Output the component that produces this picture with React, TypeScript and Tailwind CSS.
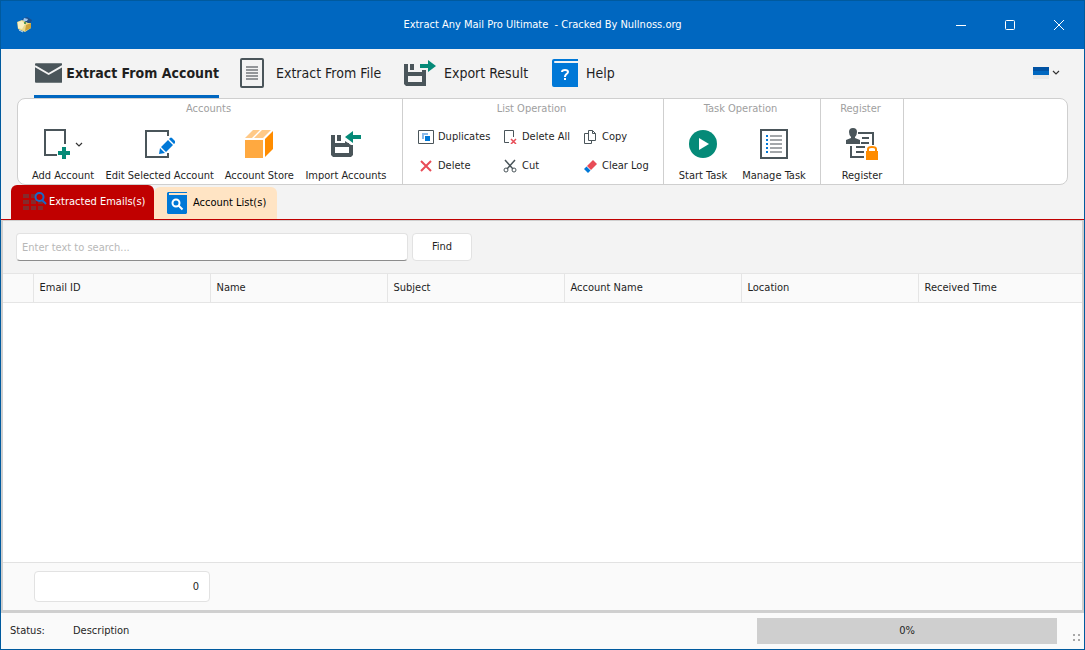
import type { ReactNode } from 'react';

const AppLogo = () => (
  <svg width="16" height="16" viewBox="0 0 16 16">
    <path d="M5 2l5-2 5 3-2 4-5 1z" fill="#1c4e8c" />
    <path d="M7 1l4 1-1 2-4 0z" fill="#9cc7ee" />
    <path d="M0 5l5-2 6 3 3 0 0 5-6 4-7-3z" fill="#e9d98c" />
    <path d="M1 5l4-1 3 3-3 5-4-1z" fill="#f7f0c4" />
    <path d="M9 8l5-2v5l-6 3z" fill="#cda33a" />
    <path d="M2 13l4 2" stroke="#cfe3f5" />
    <circle cx="8" cy="6" r="1" fill="#26803d" />
  </svg>
);

const MailIcon = () => (
  <svg width="28" height="20" viewBox="0 0 28 20">
    <rect width="28" height="20" rx="1" fill="#4a555a" />
    <path d="M0 3l14 8 14-8" fill="none" stroke="#f3f3f3" strokeWidth="2" />
  </svg>
);

const DocumentIcon = () => (
  <svg width="24" height="30" viewBox="0 0 24 30">
    <rect x="1" y="1" width="22" height="28" rx="1" fill="none" stroke="#4a555a" strokeWidth="2" />
    <path d="M6 9h12M6 12h12M6 15h12M6 18h12M6 21h12" stroke="#74787c" strokeWidth="1.500" />
  </svg>
);

const ExportIcon = () => (
  <svg width="32" height="26" viewBox="0 0 32 26">
    <path d="M0 4h4v8h14v-2h4v16H2l-2-2zM4 16v6h14v-6z" fill="#4a555a" fillRule="evenodd" />
    <path d="M6 4h4v6H6z" fill="#4a555a" />
    <path d="M16 4h8V0l8 6-8 6V8h-8z" fill="#058a78" />
  </svg>
);

const HelpIcon = () => (
  <svg width="26" height="28" viewBox="0 0 26 28">
    <path d="M2 0h24v2H3q-1 0-1 1t1 1h23v24H2q-2 0-2-2V2q0-2 2-2z" fill="#0078d7" />
    <path d="M10 13q0-2 3-2t3 2q0 1-2 2.500-1 1-1 2.500" fill="none" stroke="#fff" strokeWidth="2" />
    <path d="M12 19h2v2h-2z" fill="#fff" />
  </svg>
);

const Chevron = () => (
  <svg width="8" height="5" viewBox="0 0 8 5">
    <path d="M1 1l3 3 3-3" fill="none" stroke="#333" strokeWidth="1.200" />
  </svg>
);

const AddIcon = () => (
  <svg width="28" height="30" viewBox="0 0 28 30">
    <path d="M14 26H2V1h20v14" fill="none" stroke="#4a555a" strokeWidth="2" />
    <path d="M19 18h4v4h4v4h-4v4h-4v-4h-4v-4h4z" fill="#058a78" />
  </svg>
);

const EditIcon = () => (
  <svg width="30" height="28" viewBox="0 0 30 28">
    <path d="M23 6V1H1v26h22v-4" fill="none" stroke="#4a555a" strokeWidth="2" />
    <path d="M14 24l1-6 5 5zM16 17l7-7 5 5-7 7zM24 9l1-1q1-1 2 0l3 3q1 1 0 2l-1 1z" fill="#0078d7" />
  </svg>
);

const BoxIcon = () => (
  <svg width="28" height="28" viewBox="0 0 28 28">
    <path d="M0 10h18v18H0z" fill="#ffa940" />
    <path d="M20 9l8-8v18l-8 8z" fill="#ff8c00" />
    <path d="M0 8l8-8h7L7 8zM9 8l8-8h9l-8 8z" fill="#ffc987" />
  </svg>
);

const ImportIcon = () => (
  <svg width="30" height="26" viewBox="0 0 30 26">
    <path d="M0 4h4v8h14v2h4v10l-2 2H2l-2-2zM4 16v6h14v-6z" fill="#4a555a" fillRule="evenodd" />
    <path d="M6 4h4v6H6zM14 10l6 4h-6z" fill="#4a555a" />
    <path d="M30 4h-8V0l-8 6 8 6V8h8z" fill="#058a78" />
  </svg>
);

const DuplicatesIcon = () => (
  <svg width="16" height="14" viewBox="0 0 16 14">
    <path d="M.5.5h15v13H.5z" fill="none" stroke="#4a555a" />
    <path d="M4 3h6v2H6v4H4z" fill="#8ab9e8" />
    <path d="M7 6h5v5H7z" fill="#0078d7" />
  </svg>
);

const DeleteAllIcon = () => (
  <svg width="14" height="14" viewBox="0 0 14 14">
    <path d="M6 12.500H1.500V.5h9V7" fill="none" stroke="#4a555a" />
    <path d="M8 9l5 5M13 9l-5 5" stroke="#e84c57" strokeWidth="1.500" />
  </svg>
);

const CopyIcon = () => (
  <svg width="12" height="14" viewBox="0 0 12 14">
    <path d="M4 3.500H.5v10h7V11" fill="none" stroke="#4a555a" />
    <path d="M4.500.5h4l3 3v7h-7zM8.500.5v3h3" fill="none" stroke="#4a555a" />
  </svg>
);

const DeleteIcon = () => (
  <svg width="12" height="12" viewBox="0 0 12 12">
    <path d="M1 1l10 10M11 1L1 11" stroke="#e84c57" strokeWidth="2" />
  </svg>
);

const CutIcon = () => (
  <svg width="14" height="14" viewBox="0 0 14 14">
    <path d="M2 1l8 9M12 1L4 10" stroke="#4a555a" strokeWidth="1.500" />
    <circle cx="3" cy="11" r="2" fill="none" stroke="#4a555a" />
    <circle cx="11" cy="11" r="2" fill="none" stroke="#4a555a" />
  </svg>
);

const EraserIcon = () => (
  <svg width="13" height="13" viewBox="0 0 13 13">
    <path d="M3 6l6-6 4 4-6 6z" fill="#e84c57" />
    <path d="M0 9l2.500-2.500 4 4L4 13z" fill="#0078d7" />
  </svg>
);

const StartIcon = () => (
  <svg width="28" height="28" viewBox="0 0 28 28">
    <circle cx="14" cy="14" r="14" fill="#058a78" />
    <path d="M10 8l10 6-10 6z" fill="#fff" />
  </svg>
);

const ManageIcon = () => (
  <svg width="28" height="30" viewBox="0 0 28 30">
    <path d="M1 1h26v28H1z" fill="none" stroke="#4a555a" strokeWidth="2" />
    <path d="M6 7h2M6 11h2M6 15h2M6 19h2M6 23h2" stroke="#0078d7" strokeWidth="2" />
    <path d="M10 7h12M10 11h12M10 15h12M10 19h12M10 23h12" stroke="#a3a7aa" strokeWidth="2" />
  </svg>
);

const RegisterIcon = () => (
  <svg width="32" height="32" viewBox="0 0 32 32">
    <path d="M7 0q4 0 4 4 0 3-2 5v1l5 2v4H0v-4l5-2V9Q3 7 3 4q0-4 4-4z" fill="#4a555a" />
    <path d="M12 5h15v12M5 18v11h13M16 10h7M15 15h8M10 19h9M10 24h8" fill="none" stroke="#4a555a" strokeWidth="2" />
    <path d="M22 23v-2q0-2 4-2t4 2v2" fill="none" stroke="#ff8c00" strokeWidth="2" />
    <path d="M20 23h12v9H20z" fill="#ff8c00" />
  </svg>
);

const MailGridIcon = () => (
  <svg width="24" height="20" viewBox="0 0 24 20">
    <path d="M0 4h6M8 4h5M0 10h6M8 10h5M15 10h5M0 16h6M8 16h5M15 16h5" stroke="#852a2c" strokeWidth="4" />
    <circle cx="16.500" cy="5" r="4" fill="none" stroke="#1769c9" strokeWidth="2" />
    <path d="M19 8l4 4" stroke="#1769c9" strokeWidth="2" />
  </svg>
);

const BookSearchIcon = () => (
  <svg width="20" height="22" viewBox="0 0 20 22">
    <path d="M1 0h19v1H2v2h18v18l-1 1H1l-1-1V1z" fill="#0078d7" />
    <circle cx="9" cy="11" r="3.500" fill="none" stroke="#fff" strokeWidth="2" />
    <path d="M11.500 13.500l4 4" stroke="#fff" strokeWidth="2" />
  </svg>
);

const Group = ({ title, className, children }: { title: string; className: string; children: ReactNode }) => (
  <section className={`flex flex-col border-r border-[#cfcfcf] ${className}`}>
    <h2 className="h-5 pr-[3px] text-center leading-5 text-[#a0a0a0]">{title}</h2>
    {children}
  </section>
);

const LargeButton = ({ label, className, children }: { label: string; className: string; children: ReactNode }) => (
  <button type="button" className={`flex flex-col items-center whitespace-nowrap ${className}`}>
    <span className="flex h-11 items-center justify-center">{children}</span>
    <span className="leading-5">{label}</span>
  </button>
);

const SmallButton = ({ label, children }: { label: string; children: ReactNode }) => (
  <button type="button" className="flex h-7 items-center gap-1 whitespace-nowrap">
    <span className="flex w-4 justify-center">{children}</span>
    {label}
  </button>
);

const columns = ['Email ID', 'Name', 'Subject', 'Account Name', 'Location'];

const App = () => (
  <div className="flex min-h-screen flex-col border border-[#005a9e] bg-[#f3f3f3] font-['DejaVu_Sans_Condensed','DejaVu_Sans',sans-serif] text-[11px] text-[#1f1f1f]">
    <header className="flex h-12 items-center bg-[#0067c0] text-white">
      <div className="w-[150px] pl-4">
        <AppLogo />
      </div>
      <h1 className="flex-1 whitespace-pre text-center">Extract Any Mail Pro Ultimate  - Cracked By Nullnoss.org</h1>
      <div className="flex w-[150px] pl-[2px]">
        <button type="button" aria-label="Minimize" className="flex h-12 flex-1 items-center justify-center">
          <svg width="10" height="10" viewBox="0 0 10 10"><path d="M0 5.500h10" stroke="#fff" /></svg>
        </button>
        <button type="button" aria-label="Maximize" className="flex h-12 flex-1 items-center justify-center">
          <svg width="10" height="10" viewBox="0 0 10 10"><rect x=".5" y=".5" width="9" height="9" rx="1" fill="none" stroke="#fff" /></svg>
        </button>
        <button type="button" aria-label="Close" className="flex h-12 flex-1 items-center justify-center">
          <svg width="10" height="10" viewBox="0 0 10 10"><path d="M0 0l10 10M10 0L0 10" stroke="#fff" /></svg>
        </button>
      </div>
    </header>

    <nav className="flex h-[49px] items-stretch pl-[33px] pr-6 text-sm">
      <button type="button" className="flex w-[185px] items-center gap-1 whitespace-nowrap border-b-3 border-[#0067c0] pl-px pt-[2px] font-bold">
        <MailIcon />
        Extract From Account
      </button>
      <button type="button" className="ml-[21px] flex w-[144px] items-center gap-3 whitespace-nowrap pb-[2px]">
        <DocumentIcon />
        Extract From File
      </button>
      <button type="button" className="ml-5 flex w-[128px] items-center gap-2 whitespace-nowrap pb-[2px]">
        <ExportIcon />
        Export Result
      </button>
      <button type="button" className="ml-5 flex items-center gap-2 whitespace-nowrap pb-[2px]">
        <HelpIcon />
        Help
      </button>
      <button type="button" aria-label="Color theme" className="ml-auto flex items-center gap-[3px] pb-[2px]">
        <svg width="16" height="12" viewBox="0 0 16 12">
          <path d="M0 0h16v4H0z" fill="#0052a3" />
          <path d="M0 4h16v4H0z" fill="#0067c0" />
          <path d="M0 8h16v4H0z" fill="#e8e8e8" />
        </svg>
        <Chevron />
      </button>
    </nav>

    <div className="mx-4 flex h-[87px] rounded-lg border border-[#cfcfcf] bg-white">
      <Group title="Accounts" className="w-[385px]">
        <div className="flex justify-between pl-[14px] pr-4 pt-[3px]">
          <LargeButton label="Add Account" className="w-[62px]">
            <span className="flex items-center gap-1">
              <AddIcon />
              <Chevron />
            </span>
          </LargeButton>
          <LargeButton label="Edit Selected Account" className="w-[106px]"><EditIcon /></LargeButton>
          <LargeButton label="Account Store" className="w-[68px]"><BoxIcon /></LargeButton>
          <LargeButton label="Import Accounts" className="w-[80px]"><ImportIcon /></LargeButton>
        </div>
      </Group>
      <Group title="List Operation" className="w-[261px]">
        <div className="grid grid-cols-[84px_80px_auto] gap-y-px pl-[15px] pt-1">
          <SmallButton label="Duplicates"><DuplicatesIcon /></SmallButton>
          <SmallButton label="Delete All"><DeleteAllIcon /></SmallButton>
          <SmallButton label="Copy"><CopyIcon /></SmallButton>
          <SmallButton label="Delete"><DeleteIcon /></SmallButton>
          <SmallButton label="Cut"><CutIcon /></SmallButton>
          <SmallButton label="Clear Log"><EraserIcon /></SmallButton>
        </div>
      </Group>
      <Group title="Task Operation" className="w-[157px]">
        <div className="flex justify-between px-[14px] pt-[3px]">
          <LargeButton label="Start Task" className="w-[50px]"><StartIcon /></LargeButton>
          <LargeButton label="Manage Task" className="w-[64px]"><ManageIcon /></LargeButton>
        </div>
      </Group>
      <Group title="Register" className="w-[83px]">
        <div className="flex justify-center pt-[3px]">
          <LargeButton label="Register" className="w-[50px]"><RegisterIcon /></LargeButton>
        </div>
      </Group>
    </div>

    <div role="tablist" className="flex h-[35px] items-end border-b border-[#c00000] pl-[10px]">
      <button type="button" role="tab" aria-selected="true" className="flex h-[34px] w-[143px] items-center gap-[2px] whitespace-nowrap rounded-t-md bg-[#c00000] pl-3 text-white">
        <MailGridIcon />
        Extracted Emails(s)
      </button>
      <button type="button" role="tab" aria-selected="false" className="flex h-8 w-[123px] items-center gap-[6px] whitespace-nowrap rounded-t-md bg-[#ffe4c4] pl-[13px] text-black">
        <BookSearchIcon />
        Account List(s)
      </button>
    </div>

    <main className="flex flex-1 flex-col border-x-2 border-b-3 border-t border-[#cfcfcf]">
      <form className="flex gap-1 px-[13px] py-3">
        <input type="search" aria-label="Search" placeholder="Enter text to search..." className="h-7 w-[392px] rounded border border-[#e2e2e2] border-b-[#8c8c8c] bg-white px-[5px] placeholder:text-[#b8b8b8]" />
        <button type="button" className="h-7 w-[60px] rounded border border-[#e2e2e2] bg-white">Find</button>
      </form>
      <div className="flex-1 bg-white">
        <table className="w-full table-fixed border-collapse text-left">
          <thead>
            <tr className="h-[29px] border-y border-[#e5e5e5] bg-[#fafafa]">
              <th className="w-[30px] border-r border-[#e5e5e5]" aria-label="Row" />
              {columns.map((name) => (
                <th key={name} className="border-r border-[#e5e5e5] px-[6px] font-normal">{name}</th>
              ))}
              <th className="w-[164px] px-[6px] font-normal">Received Time</th>
            </tr>
          </thead>
          <tbody />
        </table>
      </div>
      <div className="border-t border-[#e2e2e2] bg-[#fafafa] pb-2 pl-[31px] pt-2">
        <input aria-label="Email count" readOnly value="0" className="block h-[31px] w-44 rounded border border-[#e2e2e2] bg-white px-[10px] text-right" />
      </div>
    </main>

    <footer className="flex h-9 items-center bg-[#fafafa] pl-[9px] pr-1">
      <span className="w-[63px]">Status:</span>
      <span>Description</span>
      <div role="progressbar" aria-label="Progress" aria-valuenow={0} className="ml-auto flex h-[26px] w-[300px] items-center justify-center bg-[#cfcfcf]">0%</div>
      <svg width="7" height="7" viewBox="0 0 7 7" className="mb-2 ml-4 self-end">
        <path d="M0 0h2v2H0zM5 0h2v2H5zM0 5h2v2H0zM5 5h2v2H5z" fill="#a8a8a8" />
      </svg>
    </footer>
  </div>
);

export default App;
